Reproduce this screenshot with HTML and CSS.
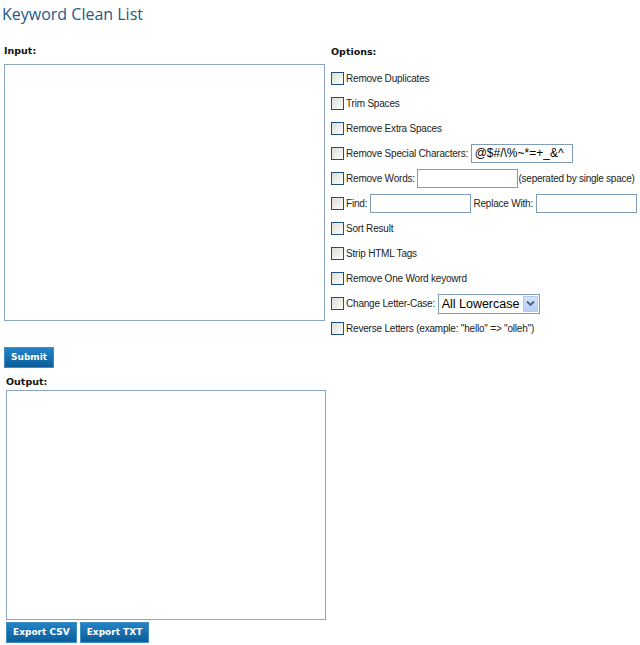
FILE: index.html
```html
<!DOCTYPE html>
<html>
<head>
<meta charset="utf-8">
<link rel="stylesheet" href="styles.css">
</head>
<body>
<h1 class="title">Keyword Clean List</h1>
<div class="top">
  <div class="col-input">
    <div class="lbl">Input:</div>
    <textarea class="ta ta-input"></textarea>
  </div>
  <div class="col-options">
    <div class="lbl lbl-options">Options:</div>
    <div class="opts">
      <div class="opt"><span class="cb"></span>Remove Duplicates</div>
      <div class="opt"><span class="cb"></span>Trim Spaces</div>
      <div class="opt"><span class="cb"></span>Remove Extra Spaces</div>
      <div class="opt"><span class="cb"></span>Remove Special Characters: <span class="field f-special">@$#/\%~*=+_&amp;^</span></div>
      <div class="opt"><span class="cb"></span>Remove Words: <span class="field f-words"></span> <span class="note">(seperated by single space)</span></div>
      <div class="opt"><span class="cb"></span>Find: <span class="field f-find"></span> Replace With: <span class="field f-replace"></span></div>
      <div class="opt"><span class="cb"></span>Sort Result</div>
      <div class="opt"><span class="cb"></span>Strip HTML Tags</div>
      <div class="opt"><span class="cb"></span>Remove One Word keyowrd</div>
      <div class="opt"><span class="cb"></span>Change Letter-Case: <span class="select"><span class="sel-text">All Lowercase</span><span class="sel-btn"><svg width="9" height="7" viewBox="0 0 9 7"><path d="M1 1.5 L4.5 5 L8 1.5" fill="none" stroke="#4d6185" stroke-width="1.8"/></svg></span></span></div>
      <div class="opt"><span class="cb"></span>Reverse Letters (example: "hello" =&gt; "olleh")</div>
    </div>
  </div>
</div>
<div class="submit-row"><span class="btn">Submit</span></div>
<div class="output">
  <div class="lbl">Output:</div>
  <textarea class="ta ta-output"></textarea>
  <div class="btns"><span class="btn">Export CSV</span><span class="btn">Export TXT</span></div>
</div>
</body>
</html>
```
FILE: styles.css
```css
html, body { margin: 0; padding: 0; background: #fff; }
body {
  font-family: "Liberation Sans", Arial, sans-serif;
  font-size: 10px;
  letter-spacing: -0.2px;
  color: #222;
  width: 640px;
}
.title {
  margin: 0;
  padding: 3px 0 0 2px;
  height: 38px;
  box-sizing: border-box;
  font-family: "Open Sans", "DejaVu Sans", sans-serif;
  font-weight: normal;
  font-size: 16px;
  line-height: 22px;
  letter-spacing: 0;
  color: #22598a;
}
.top {
  display: grid;
  grid-template-columns: 327px 1fr;
}
.col-input { padding-left: 4px; padding-top: 6px; }
.lbl {
  font-family: "DejaVu Sans", Verdana, sans-serif;
  font-weight: bold;
  font-size: 9.5px;
  letter-spacing: 0;
  line-height: 13px;
  color: #111;
}
.ta {
  display: block;
  resize: none;
  border: 1px solid #8aa6c1;
  background: #fff;
  box-sizing: border-box;
  margin: 0;
  padding: 0;
  outline: none;
}
.ta-input { width: 321px; height: 257px; margin-top: 7px; }
.col-options { padding-left: 4px; padding-top: 7px; }
.lbl-options { margin-bottom: 8px; }
.opts { display: flex; flex-direction: column; }
.opt {
  height: 25px;
  display: flex;
  align-items: center;
  white-space: pre;
  color: #222;
}
.note { letter-spacing: -0.25px; }
.cb {
  width: 11px;
  height: 11px;
  border: 1px solid #1c5180;
  background: linear-gradient(135deg, #dcdcd7 0%, #f3f3f0 70%, #fff 100%);
  margin-right: 2px;
  flex: none;
}
.field {
  display: inline-block;
  height: 19px;
  box-sizing: border-box;
  border: 1px solid #7f9db9;
  background: #fff;
  font-size: 12px;
  letter-spacing: 0;
  line-height: 17px;
  padding-left: 3px;
  color: #000;
}
.f-special { width: 102px; }
.f-words { width: 101px; }
.f-find { width: 101px; }
.f-replace { width: 101px; }
.select {
  display: inline-flex;
  align-items: center;
  width: 102px;
  height: 20px;
  box-sizing: border-box;
  border: 1px solid #7f9db9;
  background: #fff;
  font-size: 12.5px;
  letter-spacing: 0;
  color: #000;
  padding-left: 3px;
  justify-content: space-between;
}
.sel-btn {
  width: 15px;
  height: 16px;
  margin-right: 1px;
  background: linear-gradient(#d7e4fb, #b8cef6);
  border: 1px solid #b5c8ee;
  box-sizing: border-box;
  display: flex;
  align-items: center;
  justify-content: center;
}
.submit-row { padding: 6px 0 0 4px; height: 28px; box-sizing: border-box; }
.btn {
  display: inline-block;
  height: 21px;
  box-sizing: border-box;
  padding: 0 6px;
  border: 1px solid #3f8fc6;
  background: linear-gradient(#2384c6, #0a5d98);
  color: #fff;
  font-family: "DejaVu Sans", Verdana, sans-serif;
  font-weight: bold;
  font-size: 9px;
  letter-spacing: 0;
  line-height: 19px;
}
.output { padding-left: 6px; padding-top: 6px; }
.ta-output { width: 320px; height: 230px; margin-top: 2px; }
.btns { display: flex; gap: 3px; margin-top: 2px; }
```
